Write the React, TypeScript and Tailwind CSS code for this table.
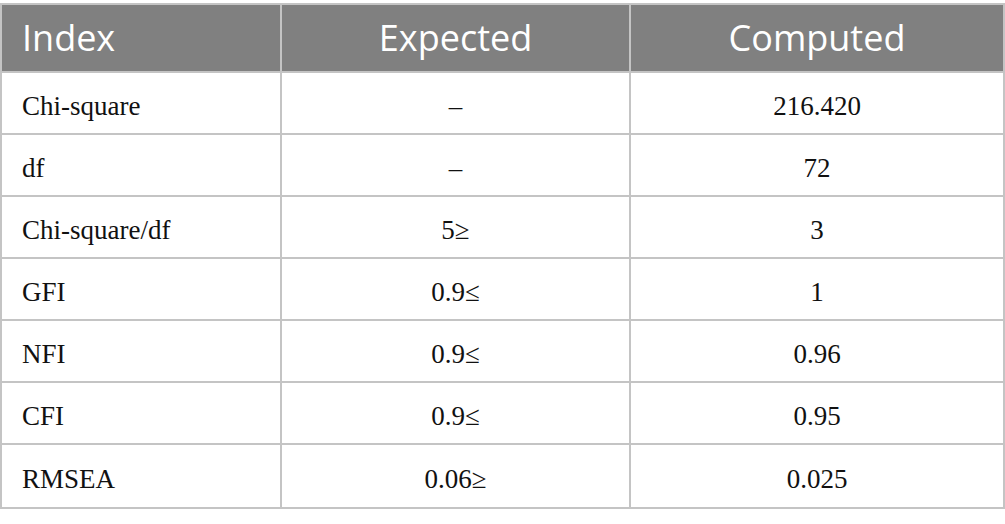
import React from "react";

const rows: [string, string, string][] = [
  ["Chi-square", "–", "216.420"],
  ["df", "–", "72"],
  ["Chi-square/df", "5≥", "3"],
  ["GFI", "0.9≤", "1"],
  ["NFI", "0.9≤", "0.96"],
  ["CFI", "0.9≤", "0.95"],
  ["RMSEA", "0.06≥", "0.025"],
];

export default function App() {
  return (
    <div className="w-[1005px] h-[524px] bg-white pt-[3px]">
      <div className="border-2 border-[#c4c4c4]">
        <div className="grid grid-cols-[280px_349px_1fr] h-[68px] bg-[#808080] border-b-2 border-[#c4c4c4] text-white text-[36px] font-['Open_Sans',sans-serif]">
          <div className="flex items-center pl-[20px] border-r-2 border-[#c4c4c4]">Index</div>
          <div className="flex items-center justify-center border-r-2 border-[#c4c4c4]">Expected</div>
          <div className="flex items-center justify-center">Computed</div>
        </div>
        {rows.map((r, i) => (
          <div
            key={i}
            className={
              "grid grid-cols-[280px_349px_1fr] h-[62px] text-[27px] text-[#111] font-['Liberation_Serif',serif] " +
              (i < rows.length - 1 ? "border-b-2 border-[#c4c4c4]" : "h-[60px]")
            }
          >
            <div className="flex items-center pl-[20px] pt-[6px] border-r-2 border-[#c4c4c4]">{r[0]}</div>
            <div className="flex items-center justify-center pt-[6px] border-r-2 border-[#c4c4c4]">{r[1]}</div>
            <div className="flex items-center justify-center pt-[6px]">{r[2]}</div>
          </div>
        ))}
      </div>
    </div>
  );
}
